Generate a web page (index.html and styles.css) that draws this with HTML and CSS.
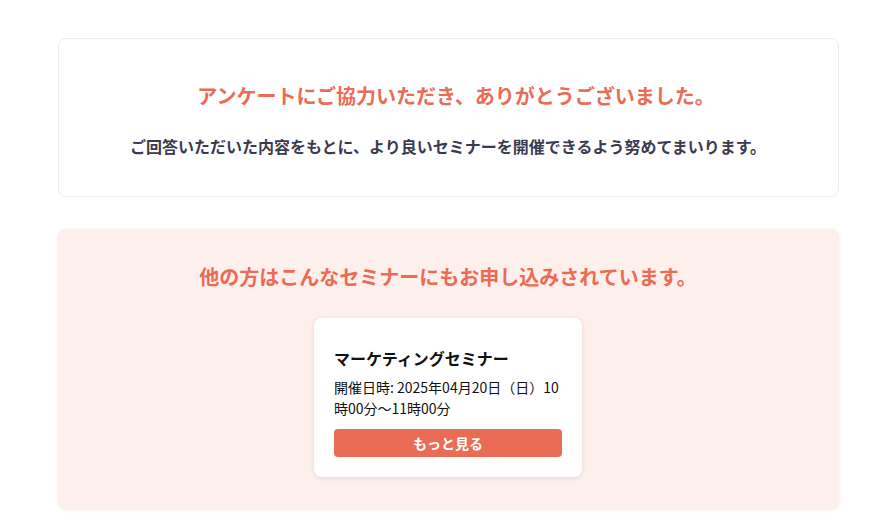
FILE: index.html
```html
<!DOCTYPE html>
<html lang="ja">
<head>
  <meta charset="UTF-8" />
  <meta name="viewport" content="width=device-width, initial-scale=1.0" />
  <title>アンケート完了</title>
  <link rel="stylesheet" href="styles.css">
</head>
<body>

  <main class="page">
    <section class="thanks">
      <h1>アンケートにご協力いただき、ありがとうございました。</h1>
      <p>ご回答いただいた内容をもとに、より良いセミナーを開催できるよう努めてまいります。</p>
    </section>

    <section class="recommend">
      <h2>他の方はこんなセミナーにもお申し込みされています。</h2>
      <div class="seminar">
        <h3>マーケティングセミナー</h3>
        <p>開催日時: 2025年04月20日（日）10時00分～11時00分</p>
        <a class="more" href="#">もっと見る</a>
      </div>
    </section>
  </main>

</body>
</html>
```

FILE: styles.css
```css
body {
  margin: 0;
  font-family: 'Noto Sans CJK JP', 'Noto Sans', sans-serif;
  background-color: #fff;
  color: #3b3b4f;
}

.page {
  max-width: 781px;
  margin: 0 auto;
  padding: 38px 0 20px;
}

.thanks {
  border: 1px solid #ececec;
  border-radius: 8px;
  padding: 42px 20px 38px;
  text-align: center;
}

.thanks h1 {
  margin: 0 0 23px;
  padding-left: 16px;
  font-size: 20px;
  line-height: 30px;
  font-weight: 700;
  color: #ea6c55;
}

.thanks p {
  margin: 0;
  font-size: 16px;
  line-height: 24px;
  font-weight: 700;
  color: #3b3b4f;
}

.recommend {
  margin-top: 32px;
  background-color: #fcefec;
  border-radius: 8px;
  box-shadow: 0 1px 4px rgba(0, 0, 0, 0.08);
  padding: 33px 20px 32px;
  text-align: center;
}

.recommend h2 {
  margin: 0 0 26px;
  font-size: 20px;
  line-height: 30px;
  font-weight: 700;
  color: #ea6c55;
}

.seminar {
  width: 228px;
  margin: 0 auto;
  padding: 28px 20px 20px;
  background: #fff;
  border-radius: 8px;
  box-shadow: 0 1px 4px rgba(0, 0, 0, 0.1);
  text-align: left;
}

.seminar h3 {
  margin: 0 0 7px;
  font-size: 16px;
  line-height: 24px;
  font-weight: 700;
  color: #111;
}

.seminar p {
  margin: 0 0 10px;
  font-size: 14px;
  line-height: 21px;
  color: #111;
}

.more {
  display: block;
  height: 28px;
  line-height: 28px;
  background-color: #ea6c55;
  color: white;
  border-radius: 4px;
  text-align: center;
  text-decoration: none;
  font-size: 14px;
  font-weight: 700;
}
```
